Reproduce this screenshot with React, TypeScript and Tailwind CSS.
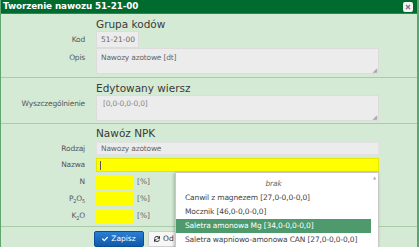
import { FaCheck, FaSync } from 'react-icons/fa'

const font = { fontFamily: '"DejaVu Sans", Verdana, sans-serif' }

function Label({ children }: { children: React.ReactNode }) {
  return <div className="text-right text-[7.5px] text-[#555] tracking-[-0.2px] pr-[11px]">{children}</div>
}

function Header({ children }: { children: React.ReactNode }) {
  return <div className="pl-[95px] text-[10.5px] leading-[12px] text-[#3a3a3a]">{children}</div>
}

function Separator() {
  return <div className="h-px bg-[#a8cda8]" />
}

const items = [
  'Canwil z magnezem [27,0-0,0-0,0]',
  'Mocznik [46,0-0,0-0,0]',
  'Saletra amonowa Mg [34,0-0,0-0,0]',
  'Saletra wapniowo-amonowa CAN [27,0-0,0-0,0]',
]

export default function App() {
  return (
    <div style={font} className="relative w-[419px] h-[247px] overflow-hidden bg-[#d5ead5] border-l border-r-2 border-[#5fa56d]">
      <div className="h-[14px] bg-[#006b2f] flex items-center justify-between pl-[2px] pr-[4px] border-b border-[#2f8a4a]">
        <span className="text-white font-bold text-[8.8px] tracking-[-0.1px]">Tworzenie nawozu 51-21-00</span>
        <div className="w-[10px] h-[10px] rounded-[2px] bg-[#f4f4f4] flex items-center justify-center">
          <svg width="6" height="6" viewBox="0 0 6 6">
            <path d="M1 1L5 5M5 1L1 5" stroke="#8a6f7a" strokeWidth="1.3" />
          </svg>
        </div>
      </div>

      <div className="pt-[4px]">
        <Header>Grupa kodów</Header>
        <div className="grid grid-cols-[95px_283px] mt-[1px]">
          <div className="h-[17px] flex items-center justify-end"><Label>Kod</Label></div>
          <div className="h-[17px] w-[43px] bg-[#ececec] border border-[#dcdcdc] text-[7.5px] text-[#666] flex items-center pl-[4px]">51-21-00</div>
          <div className="h-[26px] pt-[4px]"><Label>Opis</Label></div>
          <div className="relative h-[26px] bg-[#ececec] border border-[#dcdcdc] text-[7.5px] text-[#666] pl-[4px] pt-[3px] tracking-[-0.2px]">
            Nawozy azotowe [dt]
            <span className="absolute right-[1px] bottom-0 text-[6px] text-[#aaa] leading-none">◢</span>
          </div>
        </div>
      </div>
      <div className="h-[3px]" />
      <Separator />

      <div className="pt-[4px]">
        <Header>Edytowany wiersz</Header>
        <div className="grid grid-cols-[95px_283px] mt-[1px]">
          <div className="h-[26px] pt-[3px]"><Label>Wyszczególnienie</Label></div>
          <div className="relative h-[26px] bg-[#ececec] border border-[#dcdcdc] text-[7.5px] text-[#888] pl-[6px] pt-[2px] tracking-[-0.2px]">
            [0,0-0,0-0,0]
            <span className="absolute right-[1px] bottom-0 text-[6px] text-[#aaa] leading-none">◢</span>
          </div>
        </div>
      </div>
      <div className="h-[2px]" />
      <Separator />

      <div className="pt-[3px]">
        <Header>Nawóz NPK</Header>
        <div className="grid grid-cols-[95px_283px] gap-y-[3px] mt-[3px] items-center">
          <Label>Rodzaj</Label>
          <div className="h-[13px] bg-[#ececec] border border-[#e2e2e2] text-[7.5px] text-[#666] flex items-center pl-[4px] tracking-[-0.2px]">Nawozy azotowe</div>
          <Label>Nazwa</Label>
          <div className="h-[14px] bg-[#ffff00] border border-[#e6e600] flex items-center pl-[3px]">
            <div className="w-px h-[9px] bg-[#555]" />
          </div>
          <Label>N</Label>
          <div className="flex items-center gap-[4px]">
            <div className="h-[14px] w-[37px] bg-[#ffff00]" />
            <span className="text-[7.5px] text-[#666]">[%]</span>
          </div>
          <Label>P<sub className="text-[5px]">2</sub>O<sub className="text-[5px]">5</sub></Label>
          <div className="flex items-center gap-[4px]">
            <div className="h-[14px] w-[37px] bg-[#ffff00]" />
            <span className="text-[7.5px] text-[#666]">[%]</span>
          </div>
          <Label>K<sub className="text-[5px]">2</sub>O</Label>
          <div className="flex items-center gap-[4px]">
            <div className="h-[14px] w-[37px] bg-[#ffff00]" />
            <span className="text-[7.5px] text-[#666]">[%]</span>
          </div>
        </div>
      </div>
      <div className="h-[3px]" />
      <Separator />

      <div className="flex gap-[4px] pl-[93px] pt-[4px]">
        <button className="h-[16px] w-[50px] rounded-[2px] bg-gradient-to-b from-[#2a7fd4] to-[#0e5aab] border border-[#0b4e96] text-white text-[7.5px] flex items-center justify-center gap-[3px]">
          <FaCheck className="w-[6px] h-[6px]" />
          Zapisz
        </button>
        <button className="h-[16px] w-[28px] overflow-hidden whitespace-nowrap rounded-l-[2px] bg-[#f6f6f6] border border-[#cfcfcf] text-[#333] text-[7.5px] flex items-center pl-[5px] gap-[3px]">
          <FaSync className="w-[6px] h-[6px] shrink-0" />
          Od
        </button>
      </div>

      <div className="absolute left-[174px] top-[172px] w-[204px] h-[80px] bg-white border border-[#c8c8c8] shadow-[-1px_1px_3px_rgba(0,0,0,0.25)] flex">
        <div className="flex-1 pt-[4px] text-[7.5px] text-[#444] tracking-[-0.15px]">
          <div className="h-[14px] flex items-center justify-center italic text-[#666]">brak</div>
          {items.map((it, i) => (
            <div key={it} className={i === 2 ? 'h-[14px] flex items-center pl-[9px] bg-[#4e9a6c] text-white' : 'h-[14px] flex items-center pl-[9px]'}>
              {it}
            </div>
          ))}
        </div>
        <div className="w-[7px] flex justify-center pt-[3px]">
          <span className="text-[4px] text-[#aaa] leading-none">▲</span>
        </div>
      </div>
    </div>
  )
}
